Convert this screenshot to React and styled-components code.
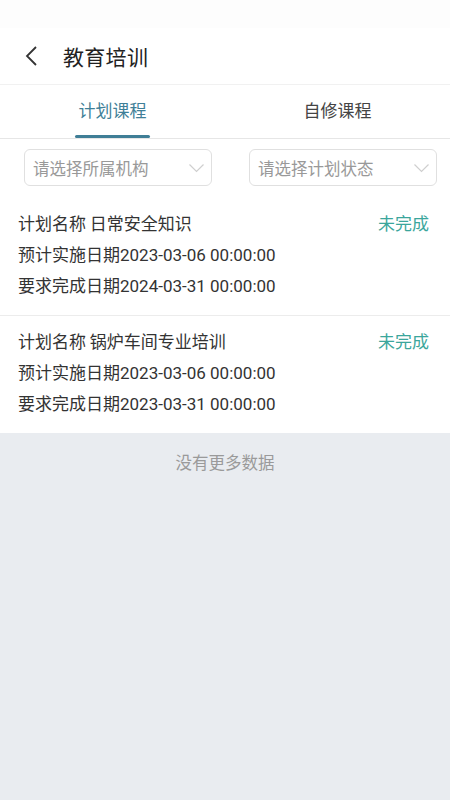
import React from 'react';
import styled, { createGlobalStyle } from 'styled-components';

const GlobalStyle = createGlobalStyle`
  html, body {
    margin: 0;
    padding: 0;
    background: #e9ecf0;
  }
  body {
    font-family: "Noto Sans CJK SC", Roboto, "Noto Sans", sans-serif;
  }
`;

const Page = styled.div`
  width: 450px;
  min-height: 800px;
  background: #e9ecf0;
`;

const Top = styled.div`
  background: #fff;
`;

const StatusBar = styled.div`
  height: 28px;
  background: #fdfdfd;
`;

const Header = styled.div`
  height: 57px;
  display: flex;
  align-items: center;
  padding-left: 20px;
  border-bottom: 1px solid #f1f1f1;
  box-sizing: border-box;
`;

const Back = styled.button`
  width: 22px;
  height: 30px;
  padding: 0;
  border: none;
  background: none;
  display: flex;
  align-items: center;
  justify-content: center;
  margin-right: 21px;
`;

const Title = styled.h1`
  margin: 0;
  font-size: 21px;
  font-weight: 400;
  color: #222;
  letter-spacing: 0.3px;
`;

const Tabs = styled.div`
  display: flex;
  height: 53px;
  border-bottom: 1px solid #e6e6e6;
`;

const Tab = styled.div`
  flex: 1;
  display: flex;
  flex-direction: column;
  align-items: center;
  justify-content: flex-end;
`;

const TabLabel = styled.span`
  font-size: 17px;
  line-height: 22px;
  color: ${(p) => (p.$active ? '#3f7f98' : '#444')};
  margin-bottom: 14px;
`;

const Underline = styled.div`
  width: 75px;
  height: 3px;
  border-radius: 2px;
  background: ${(p) => (p.$active ? '#3f7e96' : 'transparent')};
`;

const Filters = styled.div`
  display: grid;
  grid-template-columns: 188px 188px;
  justify-content: space-between;
  padding: 10px 13px 0 24px;
`;

const Select = styled.div`
  height: 37px;
  border: 1px solid #e0e0e0;
  border-radius: 6px;
  display: flex;
  align-items: center;
  justify-content: space-between;
  padding: 0 6px 0 8px;
  box-sizing: border-box;
  font-size: 16.5px;
  color: #999;
`;

const List = styled.div`
  padding-top: 12px;
`;

const Item = styled.div`
  padding: 9px 21px 15px 18px;
  border-top: ${(p) => (p.$first ? 'none' : '1px solid #ececec')};
  display: flex;
  flex-direction: column;
`;

const Row = styled.div`
  display: flex;
  justify-content: space-between;
  align-items: center;
  height: 31px;
  font-size: 17px;
  color: #333;
`;

const Num = styled.span`
  font-family: Roboto, "Noto Sans CJK SC", sans-serif;
`;

const State = styled.span`
  color: #3ba69c;
  font-size: 17px;
`;

const Footer = styled.div`
  text-align: center;
  padding-top: 17px;
  font-size: 16.5px;
  color: #9a9a9a;
`;

const Chevron = () => (
  <svg width="17" height="10" viewBox="0 0 17 10" fill="none">
    <path d="M1.5 1.5 L8.5 8.5 L15.5 1.5" stroke="#cfcfcf" strokeWidth="1.2" />
  </svg>
);

const plans = [
  { name: '日常安全知识', start: '2023-03-06 00:00:00', end: '2024-03-31 00:00:00' },
  { name: '锅炉车间专业培训', start: '2023-03-06 00:00:00', end: '2023-03-31 00:00:00' },
];

export default function App() {
  return (
    <Page>
      <GlobalStyle />
      <Top>
        <StatusBar />
        <Header>
          <Back aria-label="返回">
            <svg width="14" height="22" viewBox="0 0 14 22" fill="none">
              <path d="M12 2 L3 11 L12 20" stroke="#333" strokeWidth="1.8" />
            </svg>
          </Back>
          <Title>教育培训</Title>
        </Header>
        <Tabs>
          <Tab>
            <TabLabel $active>计划课程</TabLabel>
            <Underline $active />
          </Tab>
          <Tab>
            <TabLabel>自修课程</TabLabel>
            <Underline />
          </Tab>
        </Tabs>
        <Filters>
          <Select>
            请选择所属机构
            <Chevron />
          </Select>
          <Select>
            请选择计划状态
            <Chevron />
          </Select>
        </Filters>
        <List>
          {plans.map((p, i) => (
            <Item key={p.name} $first={i === 0}>
              <Row>
                <span>计划名称 {p.name}</span>
                <State>未完成</State>
              </Row>
              <Row>
                <span>
                  预计实施日期<Num>{p.start}</Num>
                </span>
              </Row>
              <Row>
                <span>
                  要求完成日期<Num>{p.end}</Num>
                </span>
              </Row>
            </Item>
          ))}
        </List>
      </Top>
      <Footer>没有更多数据</Footer>
    </Page>
  );
}
